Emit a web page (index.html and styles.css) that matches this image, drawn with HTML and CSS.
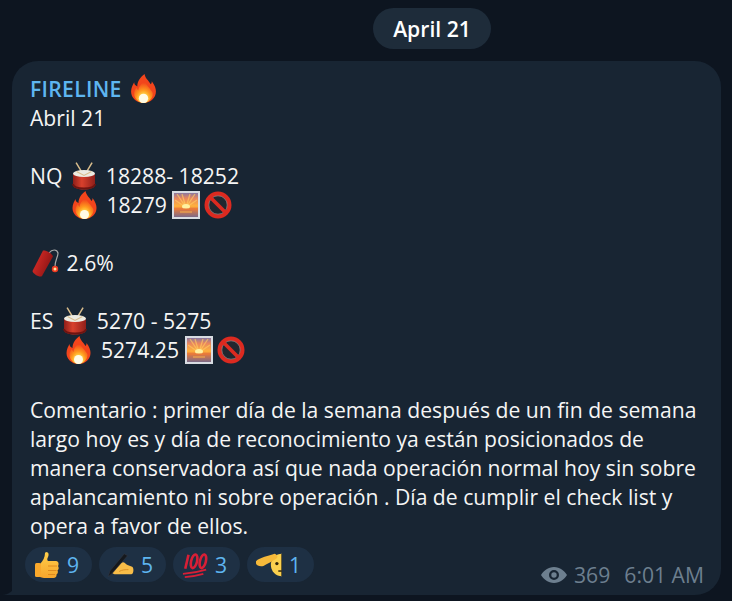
FILE: index.html
```html
<!DOCTYPE html>
<html lang="es">
<head>
<meta charset="utf-8">
<title>FIRELINE</title>
<link rel="stylesheet" href="styles.css">
</head>
<body>
<svg class="defs" width="0" height="0" aria-hidden="true">
  <defs>
    <radialGradient id="fg" cx="50%" cy="85%" r="70%">
      <stop offset="0" stop-color="#fffbe0"/><stop offset=".25" stop-color="#ffe050"/><stop offset=".55" stop-color="#ff9a1e"/><stop offset="1" stop-color="#f2451c"/>
    </radialGradient>
    <linearGradient id="sky" x1="0" y1="0" x2="0" y2="1">
      <stop offset="0" stop-color="#8a78a0"/><stop offset=".22" stop-color="#e8855f"/><stop offset=".55" stop-color="#ffb23c"/><stop offset=".66" stop-color="#e87a3a"/><stop offset="1" stop-color="#7c6a88"/>
    </linearGradient>
    <linearGradient id="drumbody" x1="0" y1="0" x2="1" y2="0">
      <stop offset="0" stop-color="#8f1f1a"/><stop offset=".4" stop-color="#d8402c"/><stop offset="1" stop-color="#8f1f1a"/>
    </linearGradient>
    <linearGradient id="dyn" x1="0" y1="0" x2="1" y2=".5">
      <stop offset="0" stop-color="#e8302a"/><stop offset="1" stop-color="#8a1414"/>
    </linearGradient>
    <linearGradient id="thumb" x1="0" y1="0" x2="0" y2="1">
      <stop offset="0" stop-color="#ffcf4a"/><stop offset="1" stop-color="#f7a52c"/>
    </linearGradient>
    <symbol id="fire" viewBox="0 0 24 28">
      <path fill="#f2451c" d="M13 0c1 5 4 6 6 10 1-1 1-2 1-3 3 4 4 7 4 10 0 6-5 11-12 11S0 23 0 17c0-4 2-7 3-9 0 2 1 3 3 4C6 7 9 3 13 0z"/>
      <path fill="url(#fg)" d="M13 5c0 4 3 6 5 9 1 2 3 3 3 5 0 5-5 9-9 9s-9-4-9-9c0-3 1-4 2-6 1 1 1 2 2 3 0-4 4-7 6-11z"/>
      <ellipse cx="12" cy="23.500" rx="4.500" ry="4.500" fill="#fffbe6"/>
    </symbol>
    <symbol id="drum" viewBox="0 0 24 28">
      <path d="M3.600.6l6 10M19.600.6l-6 10" stroke="#d9bd8c" stroke-width="1.500" fill="none"/>
      <path fill="url(#drumbody)" d="M.5 11.500V23c0 2.800 5 4.500 11 4.500s11-1.700 11-4.500V11.500z"/>
      <path fill="none" stroke="#6e1411" stroke-width="1.800" d="M.5 22c0 2.800 5 4.500 11 4.500s11-1.700 11-4.500"/>
      <ellipse cx="11.500" cy="11.500" rx="11" ry="3.600" fill="#ecebe2"/>
      <path d="M4 9.500l7.500 4 7.500-4" stroke="#d9bd8c" stroke-width="1.100" fill="none"/>
    </symbol>
    <symbol id="sunset" viewBox="0 0 28 28">
      <rect width="28" height="28" fill="#d8dce2"/>
      <rect x="2" y="2" width="24" height="24" fill="url(#sky)"/>
      <path d="M14 16.500L5 3M14 16.500L10 3M14 16.500L18 3M14 16.500L23 3M14 16.500L3 9M14 16.500L25 9" stroke="#ffc860" stroke-width="1.300" opacity=".7"/>
      <ellipse cx="14" cy="15.500" rx="4" ry="2.500" fill="#fff1a0"/>
      <rect x="2" y="17.500" width="24" height="1.200" fill="#e8793a"/>
      <rect x="8" y="20.500" width="12" height="1" fill="#f9b24a"/>
    </symbol>
    <symbol id="noentry" viewBox="0 0 28 28">
      <circle cx="14" cy="14" r="11.500" fill="#21272f" stroke="#dc2a20" stroke-width="4"/>
      <circle cx="14" cy="14" r="9.200" fill="none" stroke="#f7d6d0" stroke-width=".8" opacity=".5"/>
      <path d="M6 6l16 16" stroke="#dc2a20" stroke-width="3.800"/>
    </symbol>
    <symbol id="dynamite" viewBox="0 0 28 28">
      <path d="M17 4C20 0 25 0 26 4c0 4-3 7-3 14" stroke="#a8a8a8" stroke-width="1.200" fill="none"/>
      <path fill="url(#dyn)" d="M11 1.500C14 1 20 4 21 7.500L10 27C8 29 1 25 .5 22z"/>
      <circle cx="23" cy="20" r="3.200" fill="#ef3b22"/>
      <circle cx="23" cy="20" r="1.500" fill="#ffe69a"/>
    </symbol>
    <symbol id="like" viewBox="0 0 24 26">
      <path fill="url(#thumb)" d="M11 0c3 0 3 3 2 5s-1 3 0 4h8c3 0 3 4 2 5 1 2 1 3-.5 4.500.8 1.500.3 3-1 4 .3 2-1 3.500-3 3.500H9c-2 0-3-1-4-1V12c3-3 5-7 5-11z"/>
      <rect x="0" y="11" width="6" height="14" rx="1.500" fill="#f9a82c"/>
      <path d="M13 14h9M13 18.500h8.500M13 22.500h7" stroke="#e08a1e" stroke-width="1" fill="none"/>
    </symbol>
    <symbol id="write" viewBox="0 0 28 26">
      <path fill="#f8bd48" d="M7 16c3-2 6-5 9-6 2 0 3 2 5 3l5 2c2 1 2 8-1 8H9c-3 0-4-1-5-2z"/>
      <path d="M12 20c3-2 7-2 10-2" stroke="#d98e24" stroke-width="1" fill="none"/>
      <path d="M17.500 1l3.500 2L5 21.500l-4.500 4 1.500-6z" fill="#15181d" stroke="#3a3e45" stroke-width=".5"/>
    </symbol>
    <symbol id="hundred" viewBox="0 0 28 28">
      <g fill="none" stroke="#d81f36" stroke-width="2.800">
        <path d="M7 3L3.500 18"/>
        <ellipse cx="13" cy="10" rx="3.200" ry="7.500" transform="rotate(14 13 10)"/>
        <ellipse cx="22.500" cy="10" rx="3.200" ry="7.500" transform="rotate(14 22.500 10)"/>
        <path d="M1 23.500c8-.5 17-2 25-4.500M3 27c7-.5 13-1.500 20-3.500" stroke-width="2"/>
      </g>
    </symbol>
    <symbol id="point" viewBox="0 0 28 24">
      <path fill="#fbd04e" d="M28 0a12 12 0 0 0 0 24z"/>
      <circle cx="22.500" cy="10.500" r="1.800" fill="#33260c"/>
      <path d="M24 18.500h4" stroke="#33260c" stroke-width="1.600"/>
      <path fill="#f6b93a" d="M0 8C4 4 14 2 20 0c3 1 4 3 2 5-4 3-10 6-14 8-5 1-9-1-8-5z"/>
      <rect x="27.200" y="0" width=".8" height="24" fill="#3b3520"/>
    </symbol>
    <symbol id="eye" viewBox="0 0 26 16">
      <path fill="#6d7f8f" fill-rule="evenodd" d="M13 0c6 0 10.500 4 13 8-2.500 4-7 8-13 8S2.500 12 0 8c2.500-4 7-8 13-8zm0 3a5 5 0 1 0 0 10 5 5 0 0 0 0-10zm0 2.300a2.700 2.700 0 1 1 0 5.400 2.700 2.700 0 0 1 0-5.400z"/>
    </symbol>
  </defs>
</svg>

<main class="chat">
  <div class="date-pill">April 21</div>
  <article class="bubble">
    <div class="sender">FIRELINE <svg class="emoji em-sender"><use href="#fire"/></svg></div>
    <div class="message">Abril 21

NQ  <svg class="emoji em-tall"><use href="#drum"/></svg> 18288- 18252
        <svg class="emoji em-tall em-flame"><use href="#fire"/></svg> 18279 <svg class="emoji em-pic"><use href="#sunset"/></svg> <svg class="emoji em-square"><use href="#noentry"/></svg>

<svg class="emoji em-dyn"><use href="#dynamite"/></svg> 2.6%

ES  <svg class="emoji em-tall"><use href="#drum"/></svg> 5270 - 5275
       <svg class="emoji em-tall em-flame"><use href="#fire"/></svg> 5274.25 <svg class="emoji em-pic"><use href="#sunset"/></svg> <svg class="emoji em-square"><use href="#noentry"/></svg></div>
    <p class="message comment">Comentario : primer día de la semana después de un fin de semana largo hoy es y día de reconocimiento ya están posicionados de manera conservadora así que nada operación normal hoy sin sobre apalancamiento ni sobre operación . Día de cumplir el check list y opera a favor de ellos.</p>
    <footer class="footer">
      <div class="reactions">
        <span class="reaction"><svg class="r-icon"><use href="#like"/></svg>9</span>
        <span class="reaction"><svg class="r-icon"><use href="#write"/></svg>5</span>
        <span class="reaction"><svg class="r-icon"><use href="#hundred"/></svg>3</span>
        <span class="reaction"><svg class="r-icon"><use href="#point"/></svg>1</span>
      </div>
      <div class="meta">
        <svg class="eye"><use href="#eye"/></svg><span class="views">369</span><span>6:01 AM</span>
      </div>
    </footer>
  </article>
</main>
</body>
</html>
```
FILE: styles.css
```css
* { box-sizing: border-box; }
html, body { height: 100%; }
body {
  margin: 0;
  background: #0d1520;
  font-family: "Open Sans", sans-serif;
  color: #f5f5f5;
  overflow: hidden;
}
.defs { display: block; height: 0; }
.chat {
  display: flex;
  flex-direction: column;
  padding: 8px 11px 0 12px;
}
.date-pill {
  align-self: flex-start;
  margin-left: 361px;
  height: 41px;
  width: 118px;
  display: flex;
  align-items: center;
  justify-content: center;
  background: #1e2c3a;
  border-radius: 21px;
  font-size: 21.15px;
  font-weight: 600;
  color: #fff;
}
.bubble {
  position: relative;
  margin-top: 12px;
  height: 534px;
  padding: 13px 18px 0 18px;
  background: #182533;
  border-radius: 26px 26px 26px 0;
}
.bubble::before {
  content: "";
  position: absolute;
  left: -10px;
  bottom: 0;
  width: 10px;
  height: 14px;
  background: radial-gradient(circle at 0 0, transparent 13.500px, #182533 14.500px);
}
.sender {
  height: 29px;
  font-size: 21.15px;
  font-weight: 600;
  line-height: 29px;
  letter-spacing: .3px;
  color: #5eb5f0;
  white-space: pre;
}
.message {
  font-size: 21.15px;
  line-height: 29px;
  white-space: pre-wrap;
  color: #f5f5f5;
}
.comment { margin: 31px 0 0; }
.emoji {
  width: 28px;
  height: 28px;
  margin-top: -6px;
  margin-bottom: -6px;
  vertical-align: baseline;
}
.em-tall { width: 25px; margin-left: -1px; margin-right: 3px; }
.em-flame { margin-left: -2px; margin-right: 4px; }
.em-sender { width: 25px; height: 29px; margin-left: 3px; margin-top: -8px; }
.em-pic { margin-right: -1.500px; }
.em-dyn { margin-left: 2px; margin-right: 1px; }
.footer {
  display: flex;
  justify-content: space-between;
  align-items: flex-start;
  margin: 7px -1px 0 -5px;
}
.reactions { display: flex; gap: 7px; }
.reaction {
  display: flex;
  align-items: center;
  gap: 7px;
  width: 67px;
  height: 35px;
  padding-left: 9px;
  border-radius: 18px;
  background: #1e3044;
  color: #5eb5f0;
  font-size: 21.15px;
}
.r-icon { width: 26px; height: 26px; flex: none; }
.meta {
  display: flex;
  align-items: center;
  margin-top: 13px;
  font-size: 21.15px;
  color: #6d7f8f;
}
.eye { width: 26px; height: 16px; margin-right: 7px; }
.views { margin-right: 14px; }
```
